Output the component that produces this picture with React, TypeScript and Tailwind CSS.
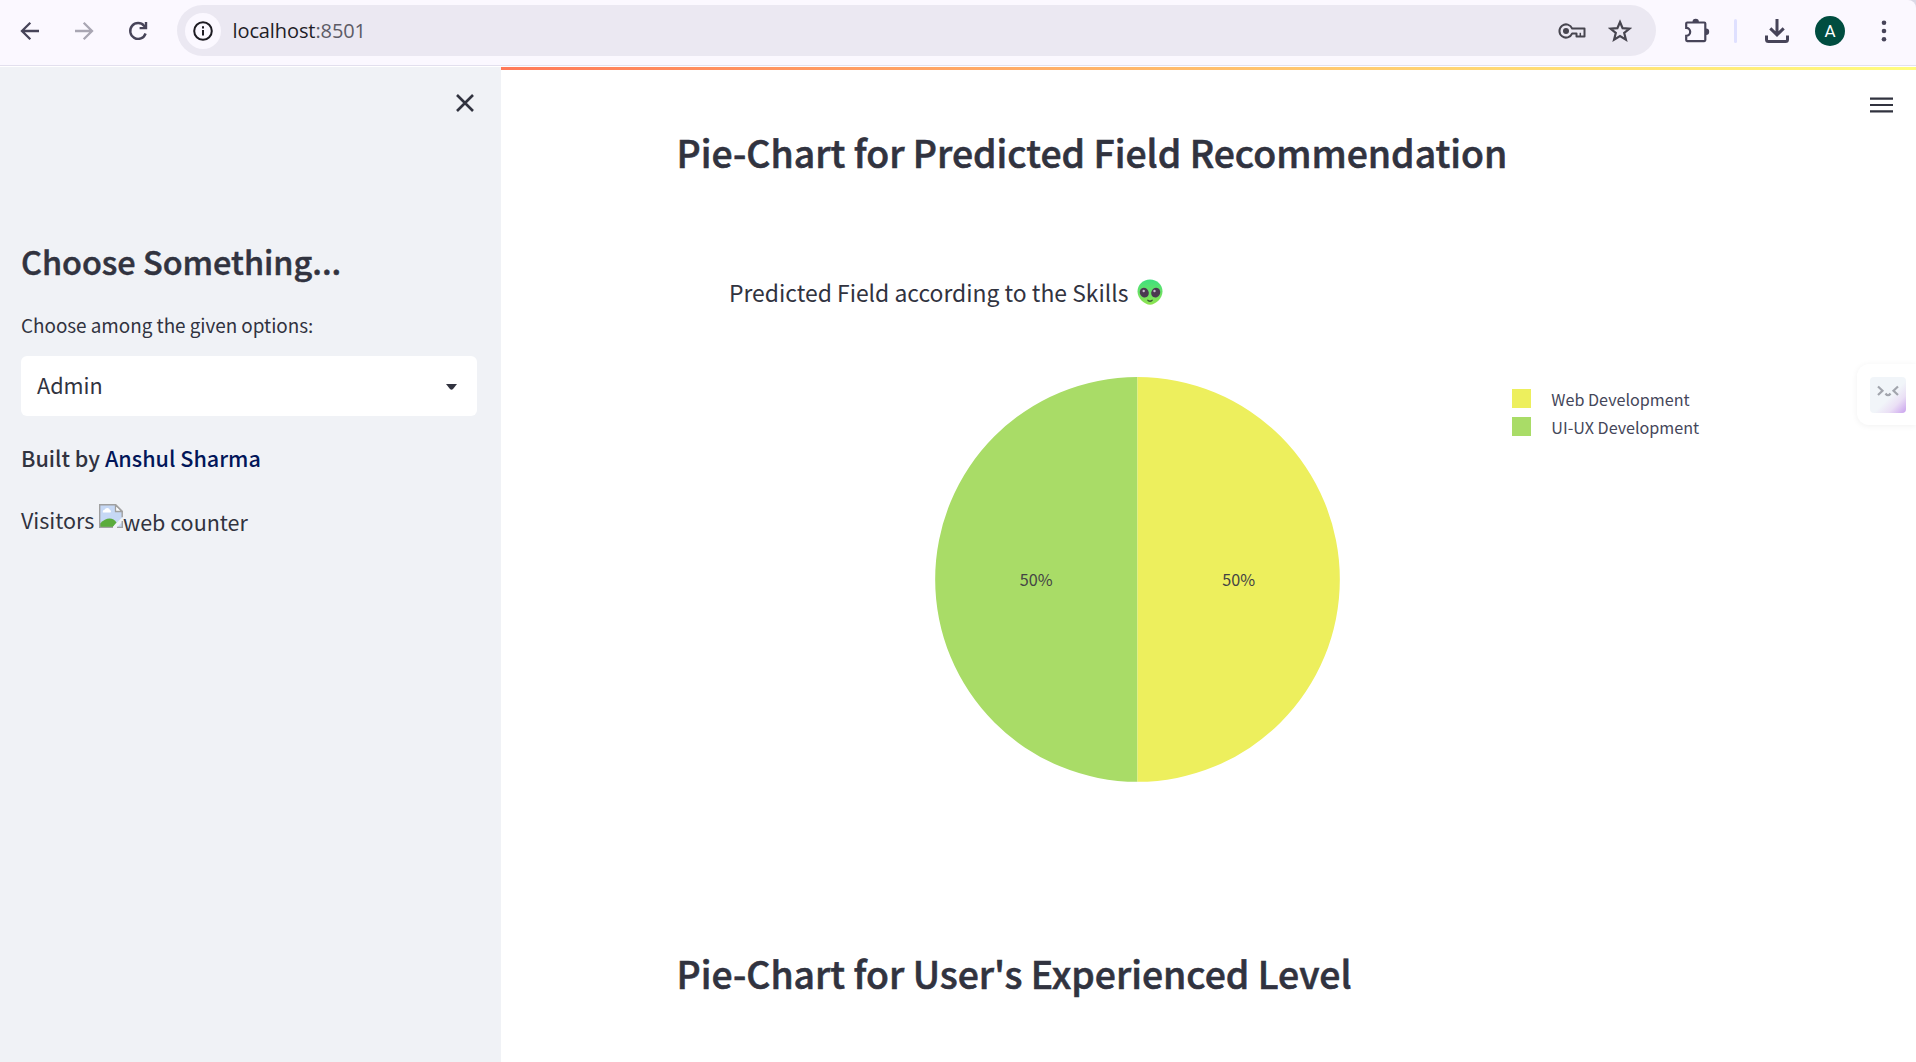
import React from "react";

function Toolbar() {
  return (
    <div className="h-[66px] shrink-0 bg-[#dcd9e6]">
      <header className="flex h-[66px] items-start rounded-tr-lg border-b border-[#e3e0ee] bg-[#fbf8ff] text-[#474459]">
        <div className="flex h-[62px] w-[177px] shrink-0 items-center pl-[17px]">
          <svg className="size-[26px]" viewBox="0 0 26 26" fill="none" stroke="currentColor" strokeWidth="2.3">
            <path d="M22 13H5.5M13.3 4.7 5 13l8.300 8.300" />
          </svg>
          <svg className="ml-[28px] size-[26px] text-[#a9a6b3]" viewBox="0 0 26 26" fill="none" stroke="currentColor" strokeWidth="2.300">
            <path d="M4 13h16.500M12.700 4.700 21 13l-8.300 8.300" />
          </svg>
          <svg className="ml-[28px] size-[26px]" viewBox="0 0 26 26" fill="none" stroke="currentColor" strokeWidth="2.400">
            <path d="M20.600 15.500A7.900 7.900 0 1 1 19.200 7.900L21 10" />
            <path d="M14.600 10.100h6.400V4" />
          </svg>
        </div>
        <div className="mt-[5px] flex h-[51px] w-[1479px] shrink-0 items-center rounded-full bg-[#ebe8f2] pr-6 pl-2">
          <div className="flex size-9 items-center justify-center rounded-full bg-[#fbf8ff] text-[#1d1b22]">
            <svg className="size-5" viewBox="0 0 20 20" fill="none" stroke="currentColor" strokeWidth="2">
              <circle cx="10" cy="10" r="8.800" />
              <path d="M10 9v5.500M10 5.300v2.100" />
            </svg>
          </div>
          <div className="ml-[11.500px] grow font-['Open_Sans',sans-serif] text-[20px] leading-7 tracking-[-0.1px] text-[#1f1d27]">
            localhost<span className="text-[#5d5b66]">:8501</span>
          </div>
          <svg className="h-[18px] w-[28px] text-[#47454f]" viewBox="0 0 28 18" fill="none" stroke="currentColor" strokeWidth="2">
            <path d="M14.200 6.600A6.600 6.600 0 1 0 14.200 11.400H18.500V14.500H26.500V6.600Z" strokeLinejoin="round" />
            <path d="M22.300 10.800v3.500" strokeWidth="1.500" />
            <circle cx="8" cy="9" r="3" fill="currentColor" stroke="none" />
          </svg>
          <svg className="ml-[22px] size-[24px] text-[#47454f]" viewBox="0 0 24 24" fill="none" stroke="currentColor" strokeWidth="2.200">
            <path d="M12 3l2.600 6.200 6.900.500-5.300 4.300 1.700 6.600L12 17l-5.900 3.600L7.800 14 2.500 9.700l6.900-.500Z" />
          </svg>
        </div>
        <div className="flex h-[62px] grow items-center">
          <svg className="ml-[27px] size-[28px]" viewBox="0 0 28 28" fill="none" stroke="currentColor" strokeWidth="2.200">
            <path d="M4.200 5.500h17.100q1 0 1 1v16.600q0 1-1 1H4.200q-1 0-1-1v-4.300a4 4 0 0 0 0-8V6.500q0-1 1-1Z" />
            <path d="M9.500 5a3.200 3.200 0 0 1 6.400 0ZM23 11.600a3.200 3.200 0 0 1 0 6.400Z" fill="currentColor" stroke="none" />
          </svg>
          <div className="ml-[23px] h-[24px] w-[3px] rounded-full bg-[#dfe0ff]" />
          <svg className="ml-[28px] size-[24px]" viewBox="0 0 24 24" fill="none" stroke="currentColor" strokeWidth="3">
            <path d="M12 0v15M5.300 9.300l6.700 6.500 6.700-6.500" />
            <path d="M1.500 16.500v4q0 2 2 2h17q2 0 2-2v-4" />
          </svg>
          <div className="ml-[26px] flex size-[30px] items-center justify-center rounded-full bg-[#004d40] font-['Roboto',sans-serif] text-[17px] leading-none text-white">
            A
          </div>
          <svg className="ml-[36px] h-[24px] w-[6px]" viewBox="0 0 6 24" fill="currentColor">
            <circle cx="3" cy="3.800" r="2.300" />
            <circle cx="3" cy="12" r="2.300" />
            <circle cx="3" cy="20.200" r="2.300" />
          </svg>
        </div>
      </header>
    </div>
  );
}

function BrokenImage() {
  return (
    <svg className="mt-[2px] size-[24px] shrink-0" viewBox="0 0 24 24">
      <path d="M.700.700H17L23.300 7v16.300H.700Z" fill="#c6d8f5" />
      <path d="M4 8.500a2 2 0 0 1 1.500-2.800 3 3 0 0 1 5.500.300 1.700 1.700 0 0 1 .500 2.500Z" fill="#fff" />
      <path d="M1 23v-3.500q5-5 9.500-5t7 4L14 23Z" fill="#5aac3c" />
      <path d="M24 12.500v4.500l-6.500 7H13l3-3.500Z" fill="#f0f2f6" />
      <path d="M14 23.400H.700V.700h16l6.500 6.500v6M23.300 17v6.400H18" fill="none" stroke="#a0a0a0" strokeWidth="1.400" />
      <path d="M16.500 1v6.500H23Z" fill="#fff" stroke="#a0a0a0" strokeWidth="1.300" />
    </svg>
  );
}

function Sidebar() {
  return (
    <aside className="flex w-[501px] shrink-0 flex-col bg-[#f0f2f6] pr-6 pl-[21px]">
      <button className="mt-6 flex size-6 items-center justify-center self-end">
        <svg className="size-[18px]" viewBox="0 0 18 18" fill="none" stroke="currentColor" strokeWidth="2.600">
          <path d="M1 1l16 16M17 1 1 17" />
        </svg>
      </button>
      <h1 className="mt-[125.500px] text-[32.400px] leading-10 font-medium [-webkit-text-stroke:0.5px_currentColor]">
        Choose Something...
      </h1>
      <label className="mt-[29.500px] text-[18.900px] leading-[30px] tracking-[-0.03px]">Choose among the given options:</label>
      <div className="mt-4 flex h-[60px] items-center justify-between rounded-md bg-white pr-5 pl-4">
        <span className="pb-[3px] text-[21.600px] leading-8">Admin</span>
        <svg className="mt-[2px] h-[6px] w-[11px]" viewBox="0 0 11 6" fill="currentColor">
          <path d="M0 0h11L7 5.100q-1.500 1.400-3 0Z" />
        </svg>
      </div>
      <p className="mt-[23.500px] text-[21.600px] leading-9 font-medium">
        Built by <a className="text-[#021659]">Anshul Sharma</a>
      </p>
      <p className="mt-[26px] flex text-[21.500px] leading-9">
        <span className="w-[78px]">Visitors</span>
        <BrokenImage />
        <span className="mt-[2px]">web counter</span>
      </p>
    </aside>
  );
}

function Alien() {
  return (
    <svg className="mt-px ml-[9px] h-[27px] w-[26px]" viewBox="0 0 26 27">
      <defs>
        <linearGradient id="skin" x1="0" y1="0" x2="0" y2="1">
          <stop offset="0" stopColor="#3fe07f" />
          <stop offset="1" stopColor="#8fe34e" />
        </linearGradient>
      </defs>
      <path d="M13 .500C20 .500 25.500 5.500 25.500 12.500S18.500 25.500 13 25.800C7.500 25.500 .500 19.500.500 12.500S6 .500 13 .500Z" fill="url(#skin)" />
      <ellipse cx="7.300" cy="13.700" rx="4.400" ry="5" transform="rotate(-28 7.300 13.700)" fill="#4b3850" />
      <ellipse cx="18.700" cy="13.700" rx="4.400" ry="5" transform="rotate(28 18.700 13.700)" fill="#4b3850" />
      <circle cx="6.700" cy="12" r="1.200" fill="#c9b8cf" />
      <circle cx="17.500" cy="12" r="1.200" fill="#c9b8cf" />
      <path d="M10.800 21.300q2.200 2 4.400 0" fill="none" stroke="#3d5a35" strokeWidth="1.300" strokeLinecap="round" />
    </svg>
  );
}

function Pie() {
  return (
    <svg className="ml-[259px] h-[406px] w-[406px] shrink-0 text-[16.200px]" viewBox="0 0 406 406">
      <path d="M202.500 0a202.400 202.400 0 0 0 0 404.800Z" fill="#a9dc67" />
      <path d="M202.500 0a202.400 202.400 0 0 1 0 404.800Z" fill="#edef5d" />
      <g fill="#444444" textAnchor="middle">
        <text x="101.300" y="209">50%</text>
        <text x="303.800" y="209">50%</text>
      </g>
    </svg>
  );
}

function Legend() {
  const items = [
    { name: "Web Development", color: "bg-[#edef5d]" },
    { name: "UI-UX Development", color: "bg-[#a9dc67]" },
  ];
  return (
    <ul className="mt-2 ml-[171.300px] text-[16.150px] text-[#45475a]">
      {items.map((item) => (
        <li key={item.name} className="flex h-7 items-center leading-7">
          <span className={`-mt-px mr-5 h-[19px] w-[19px] ${item.color}`} />
          {item.name}
        </li>
      ))}
    </ul>
  );
}

function AssistantTab() {
  return (
    <div className="absolute top-[297px] right-0 flex h-[61px] w-[59px] items-center rounded-l-xl bg-white pl-[12.500px] shadow-[0_1px_6px_rgba(0,0,0,0.06)]">
      <div className="flex size-9 justify-center rounded bg-[linear-gradient(135deg,#f1f5f9_55%,#eadff5_75%,#c9a0ee_100%)]">
        <svg className="mt-2 h-3 w-[22px]" viewBox="0 0 22 12" fill="none" stroke="#a2a5ad" strokeWidth="2.200">
          <path d="M1 1.500 5.500 5.700 1 10M21 1.500l-4.500 4.200L21 10M8.500 8.500q2.500 3.500 5 0" />
        </svg>
      </div>
    </div>
  );
}

export default function App() {
  return (
    <div className="flex h-[1062px] w-full flex-col overflow-hidden bg-white font-['Noto_Sans_CJK_SC',sans-serif] text-[#31333f]">
      <Toolbar />
      <div className="mt-px flex min-h-0 grow">
        <Sidebar />
        <main className="relative flex grow flex-col">
          <div className="h-[3px] shrink-0 bg-linear-to-r from-[#ff7959] to-[#fffd80]" />
          <svg className="absolute top-[30px] right-[23.500px] h-4 w-[23px]" viewBox="0 0 23 16" stroke="currentColor" strokeWidth="2.200">
            <path d="M0 1.700h23M0 8h23M0 14.300h23" />
          </svg>
          <div className="flex flex-col pl-[175.500px]">
            <h2 className="mt-[59.500px] text-[37.370px] leading-[44px] font-medium [-webkit-text-stroke:0.6px_currentColor]">
              Pie-Chart for Predicted Field Recommendation
            </h2>
            <div className="mt-[103.500px] flex items-center pl-[52.500px] text-[22.900px] leading-[30px]">
              Predicted Field according to the Skills
              <Alien />
            </div>
            <div className="-ml-[0.5px] mt-[70px] flex h-[406px]">
              <Pie />
              <Legend />
            </div>
            <h2 className="mt-[168px] text-[37.350px] leading-[44px] font-medium [-webkit-text-stroke:0.6px_currentColor]">
              Pie-Chart for User's Experienced Level
            </h2>
          </div>
          <AssistantTab />
        </main>
      </div>
    </div>
  );
}
